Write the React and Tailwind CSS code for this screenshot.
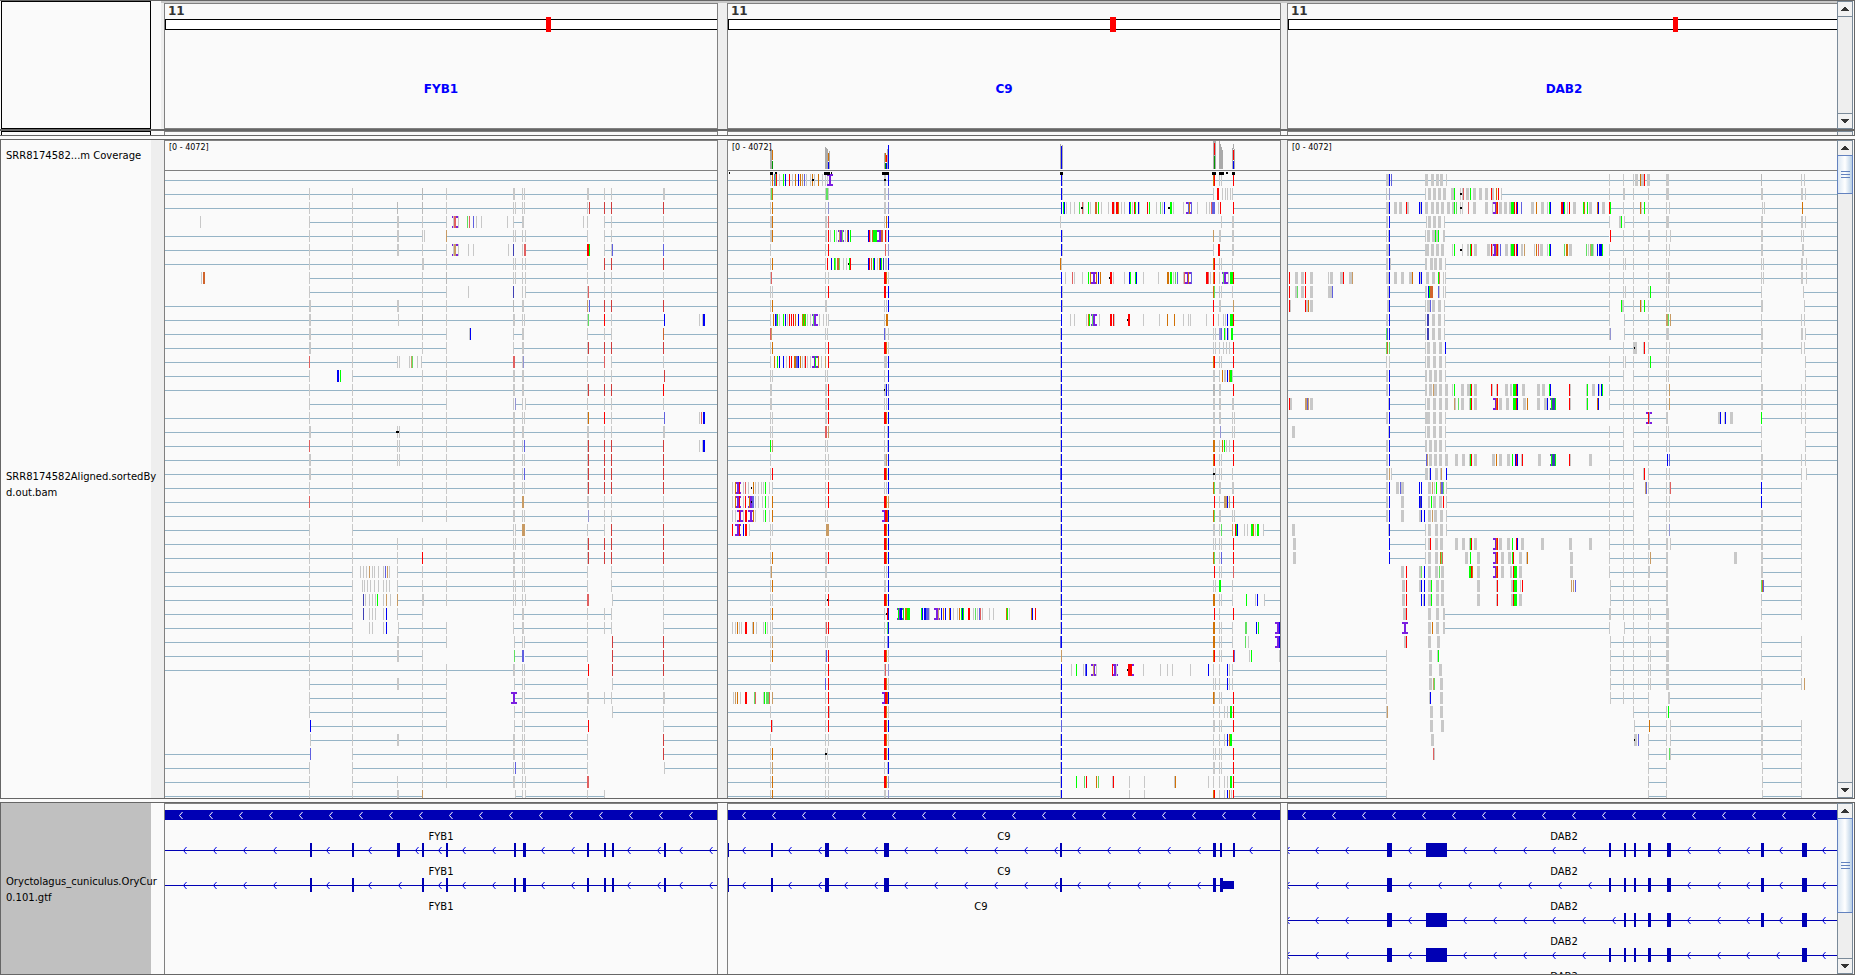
import React from "react";

const COLORS = {
  g: "#c8c8c8",
  h: "#b9b9b9",
  r: "#ff0000",
  s: "#e06060",
  t: "#d03c3c",
  b: "#0000f5",
  p: "#6060e0",
  n: "#4040b4",
  v: "#9494d2",
  o: "#d17105",
  c: "#d0642c",
  q: "#c89b64",
  e: "#00ff00",
  f: "#60e060",
  k: "#000000",
};

const ROW = 14;

/* Row notation: "=a:b" is a spliced gap line, "g12+3" is a base tick of colour g, 3 wide, "I12" an insertion. */

const A = "g665 g757 g907 g959 ";
const T4 = "g1262 t1264 t1298 t1313 t1425";
const M1 = "g1104+2 g1122 g1127 ";
const F1 = "=354:1541 ";

const fyb1Upper = {
  scale: 2.529,
  origin: 0,
  first: 0,
  rows: [
    "=417:1814",
    "=417:1814 g782 g891 h1068 g1129 g1299+2 g1321 g1326 g1487+2 g1529 g1546 g1678+2",
    "=417:1814 g782 g891 h1005 h1068 g1129 g1299 g1303 g1321 g1326 g1486 t1490 t1529 t1546 t1677",
    "=783:1130 =1299:1322 =1529:1814 g507 g782 g891 g1006+2 g1068 g1129 I1150 g1147 s1150+2 g1159 f1182 s1187 p1197 g1204 g1217 g1283 g1298 g1322+2 g1475 g1486 g1529 g1546 g1677",
    "=417:1068 =1130:1486 =1529:1814 g782 g891 g1006+2 g1068 g1073 q1129 g1298 g1303 g1321 g1328 g1486 g1529 g1546 g1677",
    "=417:1130 =1329:1486 =1529:1814 g782 g891 g1006+2 g1068 g1129 I1150 g1147 q1150+2 g1159 g1185 g1197 g1286 n1298 g1322 s1327+2 r1487+2 e1491 g1529 g1546 p1549 p1679",
    "=417:1486 =1529:1814 g782 g891 g1069+2 g1129 g1298 g1303 g1321 g1328 g1486 t1529 t1546 t1677",
    "=783:1814 g510 c515+2 g782 g891 g1068 h1129 g1298 g1303 g1321 g1328 g1486 h1529 g1546 g1677",
    "=783:1130 =1329:1814 g782 g891 g1068 g1129 g1185 n1298 g1321 g1328 g1486 s1488 g1529 g1546 g1677",
    "=417:1814 g784+2 g891 g1006+2 g1068 g1129 h1298 g1322+2 q1487 p1491 t1529 t1546 t1677",
    "=417:1680 g784+2 g891 g1007 h1068 g1129 g1299+2 g1321 g1326 g1486 f1488 r1529 g1546 b1680 g1769 g1776 b1780+2",
  ],
};

const fyb1Lower = {
  scale: 2.148,
  origin: 0,
  first: 11,
  rows: [
    "=354:959 =1103:1123 =1262:1313 =1425:1541 g666+2 g757 g907 g959 g1008 b1011 g1103 g1123+2 g1262 g1298 g1313 c1425",
    "=354:959 =1104:1541 g666+2 g757 g907 g959 g1103 g1123+2 " + T4,
    "=354:855 =905:1299 =1313:1541 s665 g757 g854 g858 g880 q884 f886 g897 g905 g959 s1105+2 g1123 v1124 g1262 s1298 g1313 g1425",
    "=354:665 =757:1541 g665 b726+2 e731 g757 g907 g959 g1104+2 g1123+2 g1262 g1298 g1313 t1427",
    F1 + A + "g1104+2 g1123+2 g1262 t1264 t1298 t1313 r1425",
    "=665:959 =1107:1123 =1129:1541 " + A + "g1103 v1107 g1122 g1129 g1262 g1298 g1313 g1425",
    "=354:1426 " + A + M1 + "g1262 o1264 r1298 g1313 p1427 g1502 s1507 b1512+2",
    F1 + "g666+2 g757 g854 g858 k854+3 g907 g959 g1104+2 g1123+2 g1263+2 g1298 g1313 g1426+2",
    "=354:1425 s665 g757 g854 g858 g907 g959 g1104+2 g1122 p1127 " + T4 + " g1502 g1509 b1512+2",
    F1 + "g666+2 g757 g854 g858 g907 g959 " + M1 + T4,
    F1 + "g666+2 g757 g907 g959 g1104+2 g1122 p1127 " + T4,
    F1 + A + M1 + T4,
    F1 + "s665 g757 g907 g959 g1104+2 g1122 q1124+2 g1263+2 g1298 g1313 g1425",
    F1 + A + M1 + "v1264 g1298 g1313 g1425",
    "=354:665 =757:1104 =1107:1123 =1129:1299 =1313:1541 g665 g757 g1103 g1107 q1125+3 g1262 g1298 t1313 t1425",
    F1 + A + "g854 g1103 g1107 g1122 g1127 " + T4,
    F1 + A + "g854 r907 " + M1 + T4,
    "=354:758 =854:1262 =1313:1541 " + A + "g774 g781 g787 q794 g800 g804 g813 g824 p829 q832 g837 g854 " + M1 + "g1262 g1313 g1425",
    "=354:758 =854:1262 =1313:1541 " + A + "g779 g783 g789 g796 g804 g813 g824 g830 g837 g854 g1103 g1107 g1122 g1127 g1262 g1313 g1425",
    "=354:757 =854:1264 =1316:1541 g665 g757 n781 g785 g794 g800 g807 e811 g824 q831 g839 q854 g909+2 g959 g1103 g1107 g1122 g1129 s1264+2 g1316 g1425",
    "=354:757 =855:908 =1103:1313 =1425:1541 g665 g757 n781 g794 g800 g807 g824 b830 g854 g907 g1103 g1123+2 g1262 g1298 g1313 g1425",
    "=354:757 =856:959 =1103:1313 =1425:1541 " + A + "g794 g800 g824 b830 g856 g1103 g1123+2 g1262 g1298 g1313 g1425",
    "=354:959 =1105:1122 =1128:1262 =1316:1541 " + A + "g855+2 g1105 g1122 g1127 g1262 t1316 t1425",
    "=354:908 =1107:1122 =1128:1262 =1316:1541 g665 g757 g855+2 g907 f1106 p1124+2 g1262 t1316 t1425",
    "=354:1264 =1316:1541 " + A + M1 + "r1264 t1316 t1425",
    "=665:959 =1105:1122 =1128:1262 =1316:1541 " + A + "g855+2 g1105 g1122 g1127 g1262 g1316 g1425",
    "=665:959 =1105:1122 =1128:1541 " + A + "I1104 g1122 g1127 g1263+2 g1298 g1313 g1426+2",
    "=665:959 =1105:1122 =1128:1262 =1316:1541 " + A + "g1105 g1122 g1127 g1262 g1316 g1425",
    "=667:959 =1105:1122 =1128:1264 =1425:1541 b667 g757 g907 g959 g1105 g1122 g1127 r1264 g1425",
    "=667:1262 =1425:1541 g667 g757 g855+2 g907 g959 " + M1 + "g1262 t1425",
    "=354:666 =757:1262 =1425:1541 p667 g757 g907 g959 " + M1 + "g1262 t1425",
    "=354:665 =757:1262 =1427:1541 " + A + "g1104 p1107 g1122 g1127 g1262 g1427",
    "=354:665 =757:1264 " + A + "g854 g1104+2 g1122 g1129 s1264+2",
    "=354:908 =1107:1122 =1129:1299 g665 g757 g855+2 q907 g1107 g1122 g1129 g1262 g1298",
  ],
};

const F2 = "=273:1670 ";
const c9Upper = {
  scale: 2.529,
  origin: 620,
  first: 0,
  rows: [
    F2 + "g381 o385 p390 f393 r397 g403 e413 b418 r428 g436 o444 b451 o457 q461 p466 g472 g482 o487 k489+2 g493 o502 g512 g519 g524 I531 g670+2 k671+2 b678 b1116 g1119 o1500 r1503 g1517 g1521 r1551",
    "=273:1502 =1549:1670 g380 f383 o385 g519 f523+2 g528 g670+2 v678 b1116 g1119 g1501 r1512+2 g1524 g1531 g1536 g1544 g1549",
    "=273:1116 =1551:1670 g381 o385 g520 v528 g670+2 v678 b1116 e1121 b1124 g1129 g1139 g1149 f1161 s1169 k1168+2 g1173 e1184 g1189 c1203+2 e1210 g1217 g1235 r1246+2 g1251 r1256+2 o1260 g1268 g1276 b1289 e1291 g1296 r1300 e1303 b1311 g1314 r1334 e1338 g1357 f1367 g1371 b1377 k1388+2 e1393+2 g1400 g1425 I1439 p1437 o1441 p1445 g1460 g1483 g1490 s1496 p1501+3 g1514 r1518 r1551",
    F2 + "g381+2 o385 g520+2 s527 g669 o674 b678 g1114 g1521 g1550+2",
    "=273:520 =584:627 =678:1670 g381+2 o385 g520+2 r527 g533 e542 g547 I559 q555 f562 g571 c575 b579 e582 b628 r631 g634 c638 e645+4 I658 c662+2 r671 g675 b678 b1116 g1119 q1501 g1517+2 g1550+2",
    "=273:1502 =1518:1670 g380 g519 r527 s671 v678 b1116 g1119 g1501 r1514+2 g1550+2",
    "=273:520 =584:627 =678:1670 g381 o385 g520 r525 b535 e542 f546 c551+2 f555 g564 g572 k578+2 e580 r583 b628 r632 c637 e641 b644 g650 o656 b659 e662 n666 g671 g675 b678 o1114 g1117 o1500 r1503 g1517 g1521 g1549",
    "=273:1116 =1551:1670 g380 s383 g519 g527 r671+2 o674 g678 b1116 g1126 s1144 g1149 g1169 e1185 I1198 o1191 o1205 b1211 o1214 r1240 k1238 r1243 g1247 g1276 b1289 e1291 e1303 b1306 g1324 g1362 o1385+2 e1392 e1394 g1399 f1404 p1410 g1425 I1437 s1427 o1438 p1445 r1484+2 s1489 g1493 o1500 r1503 g1515 I1530 f1526 g1538 e1546+3 r1552",
    F2 + "g380 g385 g519 r527 r671+2 b678 b1116 g1119 o1501 f1504 g1516 g1521 g1549",
    F2 + "g380 o385 g520+2 g669 g674 b678 b1116 g1119 r1502 g1517+2 q1551",
    "=273:380 =527:1116 =1551:1670 g381 o389 b393 p397 e399 g403 e413 b418 g423 r428 r433 r438 o444 b451 o461 e463 o467 e469 g474 g482 I494 f490 g505 g514 g521 g527 g669 o674+2 b1116 g1139 g1149 g1179 o1184 e1188 I1198 f1194 g1212 r1241+2 r1248 g1251 k1284 r1287+2 g1324 g1364 o1385 o1402 g1425 g1437 g1443 g1483 r1502 g1514 g1527 g1532 b1537 e1546+3 r1552",
  ],
};

const F3 = "=22:1540 ";
const B = "g936 b939 ";
const R3 = "r455+2 o459 ";
const Z = "g1374 g1379 ";
const c9Lower = {
  scale: 2.751,
  origin: 720,
  first: 11,
  rows: [
    "=22:1376 =1412:1540 s140 q142 g291 g297 p453 g456 g463 " + B + "g1358 g1362 v1376+2 p1379 e1387 g1392 b1396 g1400 e1409+2",
    F3 + "g140 o144 g291 r298 " + R3 + "g463 " + B + "g1358 g1363 g1374 g1385 g1393 g1401 r1412",
    "=22:139 =298:1540 g139 o149 e158 b163 b174 g183 r191 r196 o207+2 p211+2 b216 o221 g226 g232 r235 g240 g249 I262 e262 o270 g279 q291 r298 g453+2 g459 b463 " + B + "o1358 r1360 " + Z + "r1412",
    "=22:1376 =1410:1540 g140 g144 g291 g296 g453 b463 " + B + "g1359+2 g1374 o1382 g1387 g1392 b1396 o1402 e1406+2 g1410",
    F3 + "g141+2 g291+2 r298 g453+2 k453 b459 p463 " + B + "h1359+2 g1375+2 r1412",
    F3 + "g141+2 g291+2 r298 g453 g458 b463 " + B + "g1359+2 g1375+2 g1411+2",
    F3 + "g140 g144 g291+2 r298 " + R3 + "b463 " + B + "g1359+2 g1375+2 g1410 g1415",
    F3 + "g140 g144 s292+2 q298 g453 g460 b463 " + B + "g1359+2 v1376 g1410 g1415",
    F3 + "e139 q144 g291 g296 g453 g460 b463 " + B + "o1358+2 g1374 o1382 e1387 g1393 g1401 r1412",
    F3 + "g139 g291 g298 g454+2 q458 b463 " + B + "o1358 r1360 " + Z + "r1412",
    F3 + "g139 r144 g291 g298 " + R3 + "b463 p936 b939 g1358 k1359+2 g1363 " + Z + "g1410",
    "=144:1540 g34 I49 o42 r54 g64 s71 g79 k87 o92 g97 g106 g115 g120 e126 g137 g144 g291 r298 g453 g459 b463 " + B + "o1358 f1360 g1375+2 g1411+2",
    "=144:1540 g34 I49 o42 r54 g64 r70 I85 o81 p90+2 k87 g97 g106 g117 e125 g133 o144 g291 r298 " + R3 + "q463 " + B + "r1360 g1374 q1390+3 b1396 q1401 r1412",
    "=144:1540 g34 g42 I55 r53 g64 r71+2 I85 o92 g98 g119 e125 g137 o144 g291 g296 I453 r456+2 o460 b463 " + B + "o1358 f1360 g1375+2 g1410 g1415",
    "=82:1411 =1496:1540 r34 I49 r54 b64 r71+2 g81 g140 g144 q295+3 " + R3 + "b463 " + B + "g1359+2 g1374 f1379 q1410 r1418 e1421 b1424 g1442 g1451 e1464+2 o1467 g1474 e1480+2 g1495",
    F3 + "g139 g291 g298 " + R3 + "b463 " + B + "g1358 g1363 " + Z + "r1412",
    F3 + "g140 o144 g291+2 r298 " + R3 + "b463 " + B + "o1358 f1360 g1374 p1379 r1412",
    F3 + "g139 q142 g291+2 g453 g458 b463 " + B + "r1360 " + Z + "s1412",
    F3 + "g139 o144 g291 g298 g454+2 b463 " + B + "g1358 g1363 e1376+2 g1410",
    "=22:1410 =1498:1540 g139 g144 g291 k295 r298 " + R3 + "b463 " + B + "o1358+2 " + Z + "g1410 e1448 g1473 b1478 g1497",
    "=22:458 =939:1540 g139 o144 g291 g298 g453 k458 r460 b463 I495 e491 b499+2 e505 o512+2 e518+3 e553 b556 b563+2 p570+3 g576 I597 q600 b609 o615 b620 o631 b633 g642 g653 o659 e663 b667 e669 r684+2 g697 f702 g708 p714 s717 g722 g741 g752 o788 e790 g796 o857 b860 r868 " + B + "r1360 g1374 r1412",
    "=144:1410 g34 g42 o48 g53 g59 r71+2 g89 o92 g100 g119 e125 g131 g139 g144 g291 s293 r298 g453 f460 b463 " + B + "o1358+2 " + Z + "g1410 f1448+2 b1476 e1481 I1535 b1538",
    "=22:1410 g139 q144 g291 g296 g453 v460 b463 p936 b939 o1358+2 " + Z + "g1410 f1447 g1453 I1535 b1538",
    "=22:1412 g139 o144 g291 p293 r298 " + R3 + "g463 q939 o1358 r1360 " + Z + "r1412 p1415 g1456 e1462 g1539",
    "=22:939 =1410:1540 g139 g291 r298 g453 s456 v463 b939 g966 e980 g1000 p1005 b1008 I1030 q1028 g1036 I1086 r1080 g1091 I1130 r1126+3 k1121 r1133 g1165 g1211 g1231 g1244 g1294 b1343 g1358 g1374 b1396 g1401 g1410",
    F3 + "g139 p291 r298 " + R3 + "g463 " + B + "g1358 g1363 g1374 b1396 g1401 g1410",
    "=144:1540 g37 q42 o48 g56 r71+2 f95+2 s99 g119 e123 g127 f132+3 s137 q144 g291 r298 I453 r456+2 o460 b463 " + B + "o1358 q1360 " + Z + "r1412",
    F3 + "g139 g291 r298 g301 " + R3 + "g463 " + B + "g1358 g1374 g1388 g1396 e1405+2 r1412",
    F3 + "r141 g144 g291 r298 " + R3 + "b463 p939 g1359+2 " + Z + "r1412",
    F3 + "g139 g291 g298 " + R3 + "g463 " + B + "g1358 g1374 g1387 b1396 o1402 e1406+2",
    F3 + "g139 o144 g291 k291+2 g295 " + R3 + "b463 " + B + "g1358 g1363 " + Z + "r1412",
    F3 + "g139 q144 g291 g298 g453 g460 b463 " + B + "g1359+2 " + Z + "r1412",
    "=22:939 =1412:1540 g139 o144 g291 g298 " + R3 + "v463 " + B + "e980 f1002 r1008 o1035 f1041 g1079 r1082 g1126 g1167 g1250 o1253 g1343 g1358 g1374 g1387 g1396 e1405+2 r1412",
    "=22:939 =1412:1540 g139 o144 g291 g298 g454+2 v463 " + B + "g1126 g1167 o1358 r1360 g1374 g1387 b1396 o1401 g1406 r1412",
  ],
};

const D = "g942 g978 g1003 g1041 ";
const dab2Upper = {
  scale: 2.5496,
  origin: 1240,
  first: 0,
  rows: [
    "=122:1522 g376+3 b381 p387 g475+3 g491+3 g503+3 g515+3 g526 g942 g978 g1003 g1010+3 o1020 g1026+3 r1031 g1041+3 g1089+3 h1329 g1431 g1440",
    "=122:475 =667:1522 g374 v381 g473 g483+3 g496+3 g508+3 g521+3 g542+3 e547 g562 k564+2 g567 s570 g580+3 e587 g598+3 g613+3 g628+3 r641 g645+2 o655 r658 g666 g942 g979+2 g1003 g1041 g1089+3 g1330+2 g1433+2 g1441",
    "=122:381 =943:1522 g376+3 b381 g396+3 g409+3 g428+2 r424 b457 g460 b462 g475+3 g490+3 g503+3 g516+3 g531+3 g543+2 e547 f552 g562 k564+2 g567 s582 g598+3 g628+3 I649+1 g645 o654 r657 g663+3 g677+3 g690+3 e697+4 r700 r704 b708 p717 g746+3 o756 g771+3 g785 e789 b792 r821+3 b826 e828 g834 r839 g853+3 e875 o878 e886 g893+3 o911 b914 g927+3 r942 e944 g978 g1003 o1020 g1024 e1031 g1041 g1088 g1094 g1331 g1337 o1433",
    "=122:374 =381:473 =522:942 =980:1522 g375+2 b381 g475 g483+3 g496+3 g508+3 g521 g942 g968+2 e972 g980 g1003 g1041 g1089+3 g1330+2 g1432+2 g1441",
    "=122:473 =520:942 =944:1522 g374 g378 b381 g474 g480+3 g493+3 e499 g502+2 e506 g520+2 r944 g978 g1003 g1042+2 g1088 g1097 g1330+2 g1431 g1436",
    "=122:473 =942:1522 g376+3 b381 g477+4 g491+3 g503+3 g516+3 g542 e547 k564+2 g568 g581+2 e587 r591 g600+3 g633+3 I648+1 r641 g645 o654 r657 g660 p664 g680+3 g690+2 e697+4 r700 r704 b708 g720+2 q725 g752 o756 s761 g769+3 g785 e789 b792 f828 o833+2 g842+3 f884 g888 q893 f897+2 g901 b912 b920+3 e925 " + D + "g1088 g1094 g1330+2 g1435+2",
    "=122:374 =383:473 =523:1522 g375+2 b381 g383 g475+2 g487+3 g499+3 g511+3 g523 " + D + "g983 g1088 g1093 g1329 g1334 g1432+2 g1444",
    "=524:1522 r126 g144+3 g159+3 r167 g182+3 g225 g233+3 g259+3 r264 g282+3 q287 g376+3 b381 g396+3 g414+3 g434+3 o440 b457 g460 b462 g478+3 g493+3 e506 s508 g519 g524 " + D + "g1088 g1093+2 g1329 g1334 g1432+2 g1444",
    "=381:473 =524:1329 =1438:1522 r126 g143+3 f146 g159+3 r167 g182+3 g225 g232+3 p236 g377+2 b381 g475+2 b480 e483 c487+3 p506 g509 g519 g524 " + D + "g983 e1046 g1088 g1093 g1329 g1437",
    "=381:473 =522:942 =978:1329 =1440:1522 g130 r126 g170+2 r167 o174 g182+3 g377+2 b381 g473 g481+3 p486 g493+3 g508+3 g521 g942 e972 g976+2 g1003 o1020 g1023 e1031 g1041 g1088 g1094 g1330+2 g1440",
    "=122:473 =522:942 =980:1522 g376+2 b381 g473 n479+2 g493+3 g508+3 g521 g942 g980 g1003 g1041 q1088+2 f1092 q1097 g1329 g1431 g1440",
  ],
};

const L3 = "=22:290 =298:397 ";
const E5 = "g898 g936 g964 g1005 ";
const W = "g410+3 g424+3 g438+3 ";
const V = "g405+3 g420+3 g438+3 ";
const X = "g902 g936 g964 g1005 ";
const dab2Lower = {
  scale: 2.727,
  origin: 1280,
  first: 11,
  rows: [
    L3 + "=450:898 =939:1314 =1433:1520 f290 p293 b298 g397 n403+2 g418+3 g435+3 g448 g898 v901 g939 g964 g1005 g1057+3 g1314+2 g1423+2 g1433",
    L3 + "=452:964 =1005:1422 =1430:1520 f291 c293 f298 g397 " + V + "b451 g936 g968+4 k966 g991 r993 g1005 g1054 g1062 g1314+2 g1422 g1430",
    L3 + "=452:936 =942:1313 =1433:1520 g291 g298 g397 " + V + "g451 " + E5 + "g942 e1010 g1054 g1059 g1313 g1433",
    L3 + "=452:936 =964:1313 =1433:1520 g292+2 b298 g398+2 " + W + "g451 " + E5 + "g1054 g1059 g1313 g1433",
    L3 + "=898:1520 g292+2 b298 g398+2 g410+3 g423+3 q419 g438+3 g454+3 g471 e475 g498+3 g514+3 e520 r523 g533+3 r576 g580 g590 r593 g618+3 g630+2 r636 e641+4 r645 b648 g664+3 g705+3 g718+3 e736 b739 r789 g793 g836 e839 g855+3 b868 g872 b877+2 e880 " + E5 + "g1054 q1062 g1314+2 g1422 g1433",
    "=298:397 =898:1520 r26 g30+2 q71+2 p75 q78 g86+3 g295 b298 g397 " + V + "g454+3 q475 g479 f487 g498+3 g516 e520 r523 g533+3 I587+1 o590 r593 g601+3 g620+3 r636 e641+4 r645 b648 g667+3 o675 g705+3 g724+3 b729 I745 e741 n745+3 e751 r789 g793 g836 e839 o865 b868 " + E5 + "g1054 q1062 g1314+2 g1422 g1433",
    L3 + "=452:1055 =1313:1520 g292+2 b298 g398+2 " + V + "g451 g936 g964 I1006 r1005 v1008 g1056+2 g1197+2 b1201 g1212 b1215 g1231+3 e1313 g1422 g1433",
    "=298:397 =452:936 =964:1313 =1433:1520 g37+3 g295 b298 g397 " + V + "g451 " + E5 + "g1054 g1059 g1313 g1433",
    L3 + "=452:936 =964:1313 =1433:1520 g292+2 b298 g398+2 " + W + "g451 " + E5 + "g1054 g1062 g1313 g1433",
    L3 + "=898:1520 g292+2 b298 p399 q402 " + W + "g454+3 g481+3 g500+3 g516 e520 r523 g533+3 g582+3 o590 g601+3 g623+3 e634 b643 r646 b648 g658 r661 g708+3 I745 e741 n745+3 e751 r789 g793 g847+3 " + E5 + "b1057 p1061 g1314+2 g1422 g1433",
    "=22:290 =304:397 =454:964 =1005:1422 =1435:1520 g292+2 q298 g304 g399+3 g407 b410 g427+3 g437 q440 b454 " + E5 + "g991 r993 g1054 g1062 g1314+2 g1422 g1435",
    "=22:290 =454:964 =1005:1422 g293+2 b298 g320+3 p328 g334+3 b380 b386 g407+3 f415 q417 g422 e426 q437 p441+2 f445 g454 " + E5 + "q996 p999 g1054 g1062 s1065 b1313 g1422",
    "=22:290 =454:964 =1005:1422 g293+2 b298 g334+3 b380 n383 b386 g407+2 e413 g421+3 g438+3 r445 g454 " + E5 + "g1054 g1062 b1313 g1422",
    "=22:290 =454:964 =1005:1422 g293+2 b298 g334+3 g382+2 b386 b394 g407+3 q415 g424+3 g440+3 g454 " + E5 + "g1054 g1062 g1314+2 g1422",
    "=298:397 =454:964 =1005:1422 g37+3 g295 b298 g397 g408+3 g427+3 g440+3 g454 " + E5 + "g1054 v1062 g1314+2 g1422",
    "=298:397 =898:1055 =1065:1422 g40+3 b298 g397 g407+2 r411 g427+3 g440+3 g481+3 g500+3 g516 e520 r523 g533+3 I587+1 o590 r593 g601+3 g623+3 e634 r645 b648 g661+3 g716+3 g792+3 g847+3 g898 g936 g964 g1006+2 g1055+2 g1065 g1314+2 g1422",
    "=298:397 =898:1056 =1314:1422 g40+3 b298 g397 g408+3 g427+3 o438 f441 s444 g508+3 e519 g541+3 I587+1 o590 r593 g607+3 g626+3 e634 r636 g656+3 g671 o675 g795+3 g898 g936 g964 g1006 q1010 g1055+2 g1242+3 g1314+2 g1422",
    "=898:1056 =1314:1422 g334+3 r345 g381+2 f386 b394 g408+3 g427+3 f434 g443+3 e519+2 r522 o525 g541+3 I587+1 o590 r593 g607+3 g630+2 r636 e641+3 g656+3 g795+3 g898 g936 g964 g1006+2 g1055+2 g1314+2 g1422",
    "=902:1056 =1320:1422 g337+3 r345 g382+2 b386 b394 g407+3 e413 g430+3 g443+3 g541+3 g590 r593 g632+2 r636 e641+3 g655 r661 q796 q800 p805 " + X + "g1055+2 f1313 c1316 p1319 g1422",
    "=902:1056 =1313:1422 g337+3 r345 b386 g390 b394 g407+3 e413 g430+3 g443+3 g541+3 g590 r593 g632+2 r636 e641+3 g656+3 " + X + "g1055+2 g1313 g1422",
    "=450:1056 =1313:1422 g339+3 r345 g408+3 g430+3 g447+2 g900+2 g936 g964 g1005 g1010 g1057+3 g1313 g1422",
    "=450:898 =939:1313 I341 g408+3 o415 g430+3 g447+2 g898 g939 g964 g1005 g1057+3 g1313",
    "=902:1055 =1313:1422 g341+2 r345 g408+3 g432+3 " + X + "g1010 g1057+3 g1313 g1422",
    "=22:290 =902:1055 =1313:1422 g290 g410+3 g430 e433 " + X + "g1010 g1057+3 g1313 g1422",
    "=22:290 =902:1422 g290 g410+3 g438+3 " + X + "g1010 g1057+3 g1313 g1422",
    "=22:290 =902:1422 g290 g410+3 q418 f421 g440+3 " + X + "g1010 g1057+3 g1314+2 g1422 q1430",
    "=22:290 =902:1005 =1062:1313 g290 g408 b411 g440+3 " + X + "g1061+2 g1313",
    "=22:290 =964:1055 =1060:1313 g290 q293 g413+3 g440+3 g964 g1005 g1054 e1059 g1313",
    "=22:290 =966:1056 =1065:1422 g290 g413+3 g443+3 g966 o1007 g1054 g1065 g1314+2 g1422",
    "=22:290 =1005:1056 =1065:1422 g290 g416+3 g969+3 k966 p977 g1005 g1054 g1065 g1314+2 g1422",
    "=22:290 =1005:1056 =1065:1422 g290 s418 g421 g1005 g1054 f1062 g1065 g1314+2 g1422",
    "=22:290 =1005:1055 =1315:1422 g290 g1005 g1054 g1315 g1422",
    "=22:290 =1005:1055 =1315:1422 g290 g1005 g1054 g1315 g1422",
    "=22:290 =1005:1055 =1315:1422 g290 g1005 g1054 g1315 g1422",
  ],
};

/* Coverage bars: [x, width, distance from the top, height, colour] */
const c9Coverage = [
  [770, 2, 8, 21, "#aaaaaa"], [772, 1, 9, 11, "#d17105"], [772, 1, 20, 9, "#009600"],
  [825, 1, 6, 23, "#aaaaaa"], [826, 1, 7, 22, "#aaaaaa"], [827, 1, 8, 21, "#aaaaaa"], [829, 1, 10, 19, "#aaaaaa"],
  [828, 1, 12, 9, "#d17105"], [828, 1, 21, 8, "#0000f5"],
  [884, 1, 12, 17, "#aaaaaa"], [885, 1, 12, 10, "#d17105"], [885, 1, 22, 7, "#009600"],
  [886, 1, 14, 8, "#ff0000"], [886, 1, 22, 7, "#0000f5"], [887, 1, 8, 21, "#aaaaaa"], [888, 1, 4, 25, "#0000f5"],
  [1060, 1, 3, 26, "#aaaaaa"], [1062, 1, 4, 25, "#aaaaaa"], [1061, 1, 5, 24, "#0000f5"],
  [1213, 3, 0, 29, "#aaaaaa"], [1214, 1, 2, 13, "#ff0000"], [1214, 1, 15, 14, "#009600"],
  [1219, 1, 0, 29, "#aaaaaa"], [1220, 1, 3, 26, "#aaaaaa"], [1221, 1, 6, 23, "#aaaaaa"], [1222, 1, 9, 20, "#aaaaaa"],
  [1232, 1, 7, 22, "#aaaaaa"], [1234, 1, 8, 21, "#aaaaaa"], [1233, 1, 3, 6, "#aaaaaa"], [1233, 1, 9, 11, "#ff0000"], [1233, 1, 20, 9, "#0000f5"],
];
const c9Clipped = [
  [729, 1], [770, 3], [775, 2], [824, 6], [831, 1], [882, 7], [1060, 3], [1212, 4], [1219, 5], [1226, 2], [1232, 3],
];

const fybExons = [[310, 2], [352, 2], [397, 3], [422, 2], [446, 2], [514, 2], [523, 3], [587, 2], [604, 2], [612, 2], [664, 2]];
const fybArrows = [183, 213, 243, 273, 326, 368, 438, 462, 492, 541, 571, 627, 657, 679, 709];
const c9Exons = [[728, 1], [771, 2], [825, 4], [884, 5], [1060, 2], [1213, 3], [1220, 2], [1233, 2]];
const c9Arrows = [742, 788, 818, 844, 874, 904, 934, 964, 994, 1024, 1054, 1077, 1107, 1137, 1167, 1197];
const dabTail = [[1624, 2], [1634, 2], [1648, 3], [1667, 4]];

const panels = [
  {
    name: "FYB1", start: 165, width: 552, grow: "flex-[552_1_0%]", edge: "border-r", marker: 381 / 552, markerWidth: 5,
    blocks: [fyb1Upper, fyb1Lower], coverage: [], clipped: [], bandStart: 179, share: 1,
    transcripts: [
      { exons: fybExons, arrows: [...fybArrows, 415] },
      { exons: fybExons.filter((e) => e[0] !== 397), arrows: [...fybArrows, 398] },
    ],
  },
  {
    name: "C9", start: 728, width: 552, grow: "flex-[552_1_0%]", edge: "border-r", marker: 382 / 552, markerWidth: 6,
    blocks: [c9Upper, c9Lower], coverage: c9Coverage, clipped: c9Clipped, bandStart: 742, share: 1,
    transcripts: [
      { exons: c9Exons, arrows: [...c9Arrows, 1249] },
      { exons: [...c9Exons.slice(0, 6), [1220, 3]], utr: [1223, 11], end: 1234, arrows: c9Arrows, share: 506 / 552 },
    ],
  },
  {
    name: "DAB2", start: 1288, width: 549, grow: "flex-[549_1_0%]", edge: "", marker: 385 / 549, markerWidth: 5,
    blocks: [dab2Upper, dab2Lower], coverage: [], clipped: [], bandStart: 1302, share: 552 / 549,
    transcripts: [
      { exons: [[1387, 5], [1426, 21], [1609, 2], ...dabTail, [1761, 3], [1802, 5]], arrows: [1286, 1315, 1345, 1408, 1463, 1493, 1523, 1552, 1582, 1687, 1717, 1746, 1779, 1822] },
      { exons: [[1387, 5], [1609, 2], ...dabTail, [1761, 3], [1802, 5]], arrows: [1286, 1315, 1345, 1408, 1438, 1468, 1498, 1528, 1558, 1588, 1687, 1717, 1746, 1779, 1822] },
      { exons: [[1387, 5], [1426, 21], ...dabTail, [1761, 3], [1802, 5]], arrows: [1286, 1315, 1345, 1408, 1463, 1493, 1523, 1552, 1582, 1612, 1687, 1717, 1746, 1779, 1822] },
      { exons: [[1387, 5], [1426, 21], [1609, 2], ...dabTail, [1802, 5]], arrows: [1286, 1315, 1345, 1408, 1463, 1493, 1523, 1552, 1582, 1687, 1717, 1746, 1776, 1822] },
    ],
  },
];

function Row({ spec, y, scale, origin }) {
  return spec.split(" ").filter(Boolean).map((token, i) => {
    if (token[0] === "=") {
      const [a, b] = token.slice(1).split(":").map((v) => Math.round(Number(v) / scale) + origin);
      return <rect key={i} x={a} y={y + 6} width={b - a} height="1" fill="#96b4c6" />;
    }
    const [at, wide] = token.slice(1).split("+").map(Number);
    if (token[0] === "I") {
      const x = Math.round(at / scale) + origin - 3;
      return (
        <path
          key={i}
          fill="#7a1ee0"
          d={wide ? `M${x + 1} ${y}h5v12h-5v-2h2v-8h-2z` : `M${x} ${y}h6v2h-2v8h2v2h-6v-2h2v-8h-2z`}
        />
      );
    }
    const width = wide || 1;
    const x = Math.round(at / scale - width / 2) + origin;
    const dash = token[0] === "k";
    return <rect key={i} x={x} y={dash ? y + 5 : y} width={width} height={dash ? 2 : 12} fill={COLORS[token[0]]} />;
  });
}

function Reads({ panel }) {
  return (
    <svg className="block h-[630px] w-full shrink-0" viewBox={`${panel.start} 0 ${panel.width} 630`} preserveAspectRatio="none" shapeRendering="crispEdges" role="img" aria-label={`${panel.name} reads`}>
      {panel.blocks.map((block) =>
        block.rows.map((spec, i) => (
          <Row key={block.first + i} spec={spec} y={3 + (block.first + i) * ROW} scale={block.scale} origin={block.origin} />
        ))
      )}
      {panel.clipped.map(([x, w]) => (
        <rect key={x} x={x} y="1" width={w} height={w < 3 ? 2 : 3} fill="#000" />
      ))}
    </svg>
  );
}

function HeaderPanel({ panel }) {
  return (
    <div className={`min-w-0 overflow-hidden border-t border-b border-l border-[#808080] ${panel.grow} ${panel.edge}`}>
      <div className="h-[15px] pl-[3px] text-[12px] leading-[15px] font-bold text-[#333]">11</div>
      <div className="relative h-[11px] border-y border-l border-black bg-white">
        <div className="absolute -top-[3px] h-[15px] bg-[#ff0000]" style={{ left: `${panel.marker * 100}%`, width: panel.markerWidth }} />
      </div>
      <div className="mt-[52px] text-center text-[12px] leading-[15px] font-bold text-[#0000ff]" style={{ width: `${panel.share * 100}%` }}>
        {panel.name}
      </div>
    </div>
  );
}

function AlignmentPanel({ panel }) {
  return (
    <div className={`flex min-w-0 flex-col overflow-hidden border-t border-l border-[#808080] ${panel.grow} ${panel.edge}`}>
      <div className="relative h-[30px] shrink-0 border-b border-[#808080]">
        <svg className="block h-[29px] w-full" viewBox={`${panel.start} 0 ${panel.width} 29`} preserveAspectRatio="none" shapeRendering="crispEdges" aria-hidden="true">
          {panel.coverage.map(([x, w, y, h, fill], i) => (
            <rect key={i} x={x} y={y} width={w} height={h - 1} fill={fill} />
          ))}
        </svg>
        <span className="absolute top-[2px] left-[4px] text-[8px] leading-[10px] text-black">[0 - 4072]</span>
      </div>
      <Reads panel={panel} />
    </div>
  );
}

function chevron(x, y) {
  return `M${x + 3.5} ${y - 3.5}L${x + 0.5} ${y}L${x + 3.5} ${y + 3.5}`;
}

function Transcript({ panel, item }) {
  const end = item.end || panel.start + panel.width;
  return (
    <svg className="block h-[14px] w-full" viewBox={`${panel.start} 0 ${panel.width} 14`} preserveAspectRatio="none" aria-hidden="true">
      <path d={item.arrows.map((x) => chevron(x, 7.5)).join("")} fill="none" stroke="#0000e6" strokeWidth="1" />
      <g shapeRendering="crispEdges" fill="#0000b4">
        <rect x={panel.start} y="7" width={end - panel.start} height="1" />
        {item.exons.map(([x, w]) => (
          <rect key={x} x={x} y="0" width={w} height="14" />
        ))}
        {item.utr && <rect x={item.utr[0]} y="3" width={item.utr[1]} height="8" />}
      </g>
    </svg>
  );
}

function GeneLabel({ name, share }) {
  return (
    <div className="h-[21px] pt-[8px] text-center text-[10px] leading-[13px] text-black" style={{ width: `${share * 100}%` }}>
      {name}
    </div>
  );
}

function GenePanel({ panel }) {
  const band = Array.from({ length: 18 }, (_, i) => panel.bandStart + i * 30);
  return (
    <div className={`min-w-0 overflow-hidden border-t border-l border-[#808080] bg-[#fafafa] pt-[4px] ${panel.grow} ${panel.edge}`}>
      <svg className="block h-[14px] w-full" viewBox={`${panel.start} 0 ${panel.width} 14`} preserveAspectRatio="none" aria-hidden="true">
        <rect x={panel.start} y="2" width={panel.width} height="10" fill="#0000b4" />
        <path d={band.map((x) => chevron(x, 7.5)).join("")} fill="none" stroke="#fff" strokeWidth="1" />
      </svg>
      <GeneLabel name={panel.name} share={panel.share} />
      {panel.transcripts.map((item, i) => (
        <React.Fragment key={i}>
          <Transcript panel={panel} item={item} />
          <GeneLabel name={panel.name} share={item.share || panel.share} />
        </React.Fragment>
      ))}
    </div>
  );
}

function ScrollButton({ up, label }) {
  return (
    <button type="button" aria-label={label} className="flex h-[16px] w-full shrink-0 items-center justify-center border border-[#7a8a99] bg-[#f2f2f2] p-0">
      <svg className="h-[4px] w-[8px]" viewBox="0 0 8 4" shapeRendering="crispEdges" aria-hidden="true">
        <path d={up ? "M3 0h2v1h1v1h1v1h1v1H0V3h1V2h1V1h1z" : "M0 0h8v1H7v1H6v1H5v1H3V3H2V2H1V1H0z"} fill="#333" />
      </svg>
    </button>
  );
}

function ScrollBar({ name, thumb }) {
  return (
    <div className="mr-[1px] flex w-[16px] shrink-0 flex-col border-x border-[#7a8a99] bg-[#eee]">
      <div className="-mx-px">
        <ScrollButton up label={`Scroll ${name} up`} />
      </div>
      <div className="min-h-0 flex-1">
        {thumb && (
          <div className={`-mx-px -mt-px flex flex-col items-center justify-center gap-[2px] border border-[#6382bf] bg-linear-to-r from-[#dbe7f3] via-white to-[#b8cfe5] ${thumb}`}>
            <div className="h-px w-[9px] bg-[#6382bf]" />
            <div className="h-px w-[9px] bg-[#6382bf]" />
            <div className="h-px w-[9px] bg-[#6382bf]" />
          </div>
        )}
      </div>
      <div className="-mx-px">
        <ScrollButton label={`Scroll ${name} down`} />
      </div>
    </div>
  );
}

function Spread({ Panel, gapColor }) {
  return panels.map((panel, i) => (
    <React.Fragment key={panel.name}>
      <Panel panel={panel} />
      {i === 0 && <div className={`w-[9px] shrink-0 ${gapColor}`} />}
      {i === 1 && <div className={`w-[6px] shrink-0 ${gapColor}`} />}
    </React.Fragment>
  ));
}

function SliverPanel({ panel }) {
  return <div className={`min-w-0 border-t border-l border-[#808080] ${panel.grow} ${panel.edge}`} />;
}

export default function App() {
  return (
    <div className="flex h-screen flex-col overflow-hidden bg-[#fafafa] font-['DejaVu_Sans',sans-serif] text-black">
      <header className="flex h-[131px] shrink-0 border-t border-r border-b-2 border-[#666]">
        <div className="ml-px w-[150px] shrink-0 border border-black" />
        <div className="w-[10px] shrink-0" />
        <div className="flex min-w-0 flex-1 border-t-2 border-[#c8c8c8]">
          <div className="w-[3px] shrink-0 bg-[#eee]" />
          <Spread Panel={HeaderPanel} gapColor="bg-[#eee]" />
        </div>
        <ScrollBar name="header" />
      </header>

      <div className="flex h-[5px] shrink-0 border-r border-b border-[#666]">
        <div className="ml-px w-[150px] shrink-0 border-x border-t border-black" />
        <div className="w-[13px] shrink-0" />
        <Spread Panel={SliverPanel} gapColor="bg-[#fafafa]" />
        <div className="mr-[1px] w-[16px] shrink-0 border-x border-t border-[#7a8a99] bg-[#eee]" />
      </div>

      <main className="mt-[3px] flex min-h-0 flex-1 border border-[#666]">
        <div className="relative z-10 flex w-[150px] shrink-0 flex-col pl-[5px] text-[10px] leading-[16px] whitespace-nowrap">
          <div className="flex h-[31px] shrink-0 items-center">SRR8174582...m Coverage</div>
          <div className="flex flex-1 flex-col justify-center">
            <div>SRR8174582Aligned.sortedBy</div>
            <div>d.out.bam</div>
          </div>
        </div>
        <div className="w-[13px] shrink-0 bg-[#eee]" />
        <Spread Panel={AlignmentPanel} gapColor="bg-[#eee]" />
        <ScrollBar name="alignments" thumb="h-[39px]" />
      </main>

      <section className="mt-[3px] flex h-[173px] shrink-0 border border-[#666]">
        <div className="relative z-10 flex w-[150px] shrink-0 flex-col justify-center bg-[#c0c0c0] pt-[2px] pl-[5px] text-[10px] leading-[16px] whitespace-nowrap">
          <div>Oryctolagus_cuniculus.OryCur</div>
          <div>0.101.gtf</div>
        </div>
        <div className="w-[13px] shrink-0" />
        <Spread Panel={GenePanel} gapColor="bg-[#fafafa]" />
        <ScrollBar name="genes" thumb="h-[95px]" />
      </section>
    </div>
  );
}
